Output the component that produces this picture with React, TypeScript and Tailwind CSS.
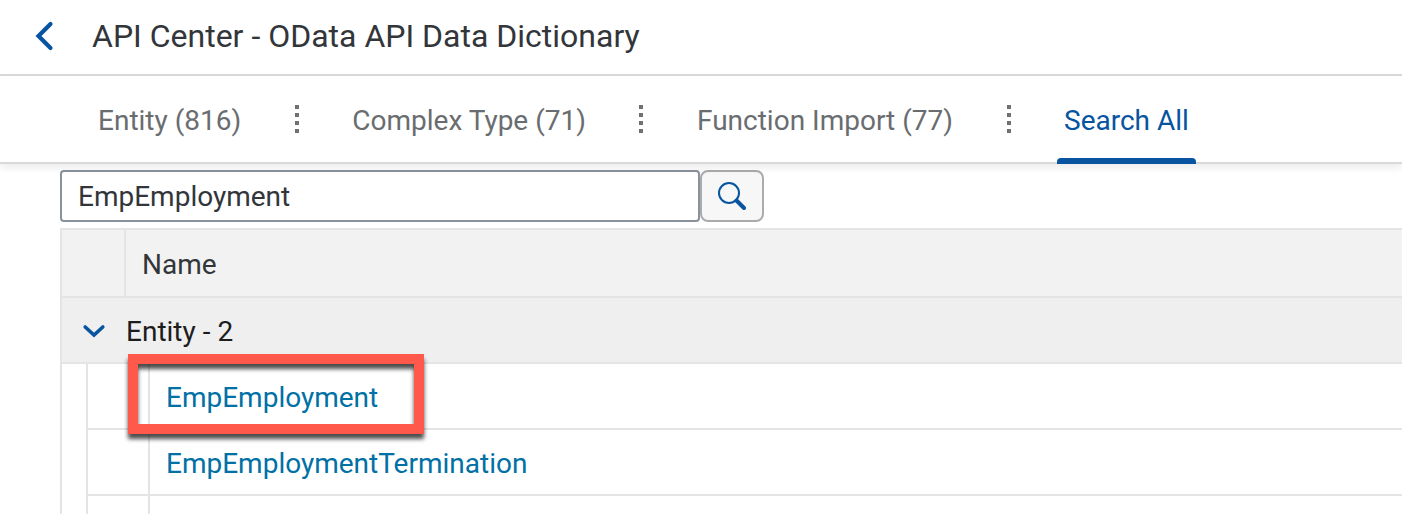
import { Fragment, useState } from "react";

const tabs = ["Entity (816)", "Complex Type (71)", "Function Import (77)", "Search All"];
const results = ["EmpEmployment", "EmpEmploymentTermination", ""];

function Separator() {
  return (
    <span aria-hidden="true" className="flex w-1 shrink-0 flex-col gap-1">
      {[0, 1, 2, 3].map((dot) => (
        <span key={dot} className="h-1 w-1 bg-[#6f7074]" />
      ))}
    </span>
  );
}

export default function App() {
  const [active, setActive] = useState("Search All");
  const [query, setQuery] = useState("EmpEmployment");
  const [open, setOpen] = useState(true);

  return (
    <div className="h-screen overflow-hidden bg-white font-['Roboto','Liberation_Sans',sans-serif] text-[28px] leading-8 text-[#32363a]">
      <header className="flex h-[76px] items-center border-b-2 border-[#d9d9d9] pb-[2px] pl-8">
        <button type="button" aria-label="Back" className="mr-9 flex h-8 w-6 items-center justify-center">
          <svg width="24" height="32" viewBox="0 0 24 32" fill="none" aria-hidden="true">
            <path d="M18.5 4 6.5 16l12 12" stroke="#0854a0" strokeWidth="4.2" strokeLinecap="round" strokeLinejoin="miter" />
          </svg>
        </button>
        <h1 className="text-[32px] leading-10 text-[#32363a]">API Center - OData API Data Dictionary</h1>
      </header>

      <nav className="relative flex h-[88px] items-center border-b-2 border-[#d9d9d9] pl-[91px] shadow-[0_4px_8px_rgba(0,0,0,0.08)]">
        {tabs.map((tab, i) => (
          <Fragment key={tab}>
            {i > 0 && (
              <span className="flex w-[97px] shrink-0 justify-center">
                <Separator />
              </span>
            )}
            <button
              type="button"
              onClick={() => setActive(tab)}
              className={
                tab === active
                  ? "relative h-[88px] shrink-0 self-start px-[7px] pt-[2px] text-[#0854a0]"
                  : "relative h-[88px] shrink-0 self-start px-[7px] pt-[2px] text-[#6a6d70]"
              }
            >
              {tab}
              {tab === active && <span className="absolute inset-x-0 bottom-0 h-[6px] rounded-t bg-[#0854a0]" />}
            </button>
          </Fragment>
        ))}
      </nav>

      <main className="pl-[60px] pt-[6px]">
        <form className="flex" onSubmit={(e) => e.preventDefault()}>
          <input
            type="text"
            aria-label="Search all"
            value={query}
            onChange={(e) => setQuery(e.target.value)}
            className="h-[52px] w-[640px] rounded border-2 border-[#89919a] bg-white px-4 text-[#32363a] outline-none"
          />
          <button
            type="submit"
            aria-label="Search"
            className="flex h-[52px] w-16 items-center justify-center rounded-lg border-2 border-[#ababab] bg-[#f7f7f7]"
          >
            <svg width="28" height="28" viewBox="0 0 28 28" fill="none" stroke="#0854a0" aria-hidden="true">
              <circle cx="11" cy="11" r="10" strokeWidth="2" />
              <path d="m18.5 18.5 7.5 7.5" strokeWidth="4" strokeLinecap="round" />
            </svg>
          </button>
        </form>

        <table className="mt-[6px] w-full border-separate border-spacing-0 border-l-2 border-t-2 border-[#e4e4e4] text-left">
          <thead>
            <tr className="bg-[#f2f2f2]">
              <th aria-label="Expand" className="h-[68px] w-16 border-b-2 border-r-2 border-[#e4e4e4] p-0" />
              <th className="border-b-2 border-[#e4e4e4] px-4 pb-0 pt-1 font-normal text-[#32363a]">Name</th>
            </tr>
          </thead>
          <tbody>
            <tr className="bg-[#efefef] text-[#1d1d1d]">
              <td colSpan={2} className="h-[66px] border-b-2 border-[#e4e4e4] px-0 pb-0 pt-1">
                <div className="flex items-center">
                  <button
                    type="button"
                    aria-label="Toggle Entity"
                    aria-expanded={open}
                    onClick={() => setOpen(!open)}
                    className="flex h-8 w-16 items-center justify-center"
                  >
                    <svg width="24" height="16" viewBox="0 0 24 16" fill="none" aria-hidden="true">
                      <path d="m3.2 3 8.8 8 8.8-8" stroke="#0854a0" strokeWidth="3.6" strokeLinecap="round" />
                    </svg>
                  </button>
                  Entity - 2
                </div>
              </td>
            </tr>
            {open && (
              <tr>
                <td colSpan={2} className="py-0 pl-6 pr-0">
                  <table className="w-full border-separate border-spacing-0 border-l-2 border-[#e4e4e4]">
                    <tbody>
                      {results.map((name, i) => (
                        <tr key={name}>
                          <td className="h-[66px] w-[62px] border-b-2 border-r-2 border-[#e4e4e4] p-0" />
                          <td className="relative border-b-2 border-[#e4e4e4] px-4 pb-0 pt-1">
                            {name && (
                              <a href="#" className="text-[#0070a5]">
                                {name}
                              </a>
                            )}
                            {i === 0 && (
                              <span className="pointer-events-none absolute -left-[22px] -top-[10px] z-10 h-20 w-[296px] border-10 border-[#ff594c] drop-shadow-[0_5px_2px_rgba(0,0,0,0.7)]" />
                            )}
                          </td>
                        </tr>
                      ))}
                    </tbody>
                  </table>
                </td>
              </tr>
            )}
          </tbody>
        </table>
      </main>
    </div>
  );
}
